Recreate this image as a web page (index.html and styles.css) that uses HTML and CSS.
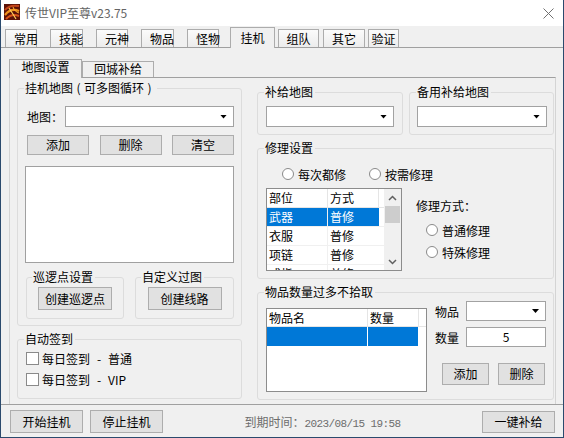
FILE: index.html
```html
<!DOCTYPE html>
<html lang="zh-CN">
<head>
<meta charset="utf-8">
<title>传世VIP至尊v23.75</title>
<link rel="stylesheet" href="styles.css">
</head>
<body>
<div class="window">
  <header class="titlebar">
    <svg class="app-icon" viewBox="0 0 16 16" width="16" height="16" aria-hidden="true">
      <rect width="16" height="16" fill="#5c1208"/>
      <path d="M1 6 C4 2 9 1 15 2" stroke="#c4461a" stroke-width="2" fill="none"/>
      <path d="M1 11 C5 6 10 5 15 7" stroke="#f0921e" stroke-width="2.2" fill="none"/>
      <path d="M2 15 C6 11 10 10 15 12" stroke="#d9541a" stroke-width="2" fill="none"/>
      <path d="M5 4 C7 7 9 10 12 15" stroke="#ffcf5a" stroke-width="1.2" fill="none"/>
      <path d="M9 3 C10 6 12 8 15 9" stroke="#ffb233" stroke-width="1" fill="none"/>
    </svg>
    <span class="title">传世VIP至尊v23.75</span>
    <svg class="close" viewBox="0 0 11 11" width="11" height="11" aria-hidden="true">
      <path d="M0.5 0.5 L10.5 10.5 M10.5 0.5 L0.5 10.5" stroke="#707070" stroke-width="1"/>
    </svg>
  </header>

  <nav class="tabs">
    <div class="tab left">常用</div>
    <div class="tab left w33">技能</div>
    <div class="tab left">元神</div>
    <div class="tab left w33">物品</div>
    <div class="tab left">怪物</div>
    <div class="tab active">挂机</div>
    <div class="tab team">组队</div>
    <div class="tab other">其它</div>
    <div class="tab verify">验证</div>
  </nav>

  <main class="panel">
    <div class="subtabs">
      <div class="subtab active">地图设置</div>
      <div class="subtab">回城补给</div>
    </div>

    <div class="subpanel">
      <div class="col-left">
        <fieldset class="group">
          <legend>挂机地图<span class="paren">(</span>可多图循环<span class="paren">)</span></legend>
          <div class="maps-body">
            <div class="field-row">
              <span class="field-label">地图：</span>
              <div class="combo"></div>
            </div>
            <div class="btn-row">
              <button class="btn btn-sm">添加</button>
              <button class="btn btn-sm">删除</button>
              <button class="btn btn-sm">清空</button>
            </div>
            <div class="listbox"></div>
            <div class="sub-row">
              <fieldset class="group sub">
                <legend>巡逻点设置</legend>
                <button class="btn btn-create">创建巡逻点</button>
              </fieldset>
              <fieldset class="group sub sub-wide">
                <legend>自定义过图</legend>
                <button class="btn btn-create">创建线路</button>
              </fieldset>
            </div>
          </div>
        </fieldset>

        <fieldset class="group">
          <legend>自动签到</legend>
          <div class="sign-body">
            <label class="check-row"><span class="checkbox"></span>每日签到<span class="dash">-</span>普通</label>
            <label class="check-row"><span class="checkbox"></span>每日签到<span class="dash">-</span>VIP</label>
          </div>
        </fieldset>
      </div>

      <div class="col-right">
        <div class="top-row">
          <fieldset class="group supply">
            <legend>补给地图</legend>
            <div class="combo-body"><div class="combo"></div></div>
          </fieldset>
          <fieldset class="group supply-alt">
            <legend>备用补给地图</legend>
            <div class="combo-body tight"><div class="combo"></div></div>
          </fieldset>
        </div>

        <fieldset class="group spaced">
          <legend>修理设置</legend>
          <div class="repair-body">
            <div class="radio-row">
              <span class="radio-item"><span class="radio"></span>每次都修</span>
              <span class="radio-item second"><span class="radio"></span>按需修理</span>
            </div>
            <div class="repair-main">
              <div class="listview repair-list">
                <div class="lv-body">
                  <div class="lv-head"><span class="cell c-part">部位</span><span class="cell c-mode">方式</span></div>
                  <div class="lv-row selected"><span class="cell c-part">武器</span><span class="cell c-mode">普修</span></div>
                  <div class="lv-row"><span class="cell c-part">衣服</span><span class="cell c-mode">普修</span></div>
                  <div class="lv-row"><span class="cell c-part">项链</span><span class="cell c-mode">普修</span></div>
                  <div class="lv-row"><span class="cell c-part">戒指</span><span class="cell c-mode">普修</span></div>
                </div>
                <div class="scrollbar">
                  <div class="sb-btn">
                    <svg viewBox="0 0 9 6" width="9" height="6"><polyline points="1,5 4.5,1.5 8,5" fill="none" stroke="#606060" stroke-width="1.5"/></svg>
                  </div>
                  <div class="sb-thumb"></div>
                  <div class="sb-fill"></div>
                  <div class="sb-btn">
                    <svg viewBox="0 0 9 6" width="9" height="6"><polyline points="1,1 4.5,4.5 8,1" fill="none" stroke="#606060" stroke-width="1.5"/></svg>
                  </div>
                </div>
              </div>
              <div class="repair-side">
                <div class="side-label">修理方式：</div>
                <div class="radio-list">
                  <span class="radio-item"><span class="radio"></span>普通修理</span>
                  <span class="radio-item"><span class="radio"></span>特殊修理</span>
                </div>
              </div>
            </div>
          </div>
        </fieldset>

        <fieldset class="group spaced">
          <legend>物品数量过多不拾取</legend>
          <div class="items-body">
            <div class="listview items-list">
              <div class="lv-body">
                <div class="lv-head"><span class="cell c-name">物品名</span><span class="cell c-qty">数量</span></div>
                <div class="lv-row selected"><span class="cell c-name"></span><span class="cell c-qty"></span></div>
              </div>
            </div>
            <div class="items-side">
              <div class="side-row">
                <span class="side-name">物品</span>
                <div class="combo"></div>
              </div>
              <div class="side-row gap">
                <span class="side-name">数量</span>
                <div class="edit">5</div>
              </div>
              <div class="side-btns">
                <button class="btn btn-item">添加</button>
                <button class="btn btn-item">删除</button>
              </div>
            </div>
          </div>
        </fieldset>
      </div>
    </div>
  </main>

  <footer class="bottombar">
    <button class="btn btn-foot">开始挂机</button>
    <button class="btn btn-foot second">停止挂机</button>
    <div class="expire">到期时间：<span class="mono">2023/08/15 19:58</span></div>
    <button class="btn btn-foot supply-btn">一键补给</button>
  </footer>
</div>
</body>
</html>
```

FILE: styles.css
```css
* { box-sizing: border-box; }

html, body {
  margin: 0;
  padding: 0;
}

body {
  width: 564px;
  height: 438px;
  overflow: hidden;
  background: #f0f0f0;
  font-family: "Noto Sans CJK SC", "Noto Sans", sans-serif;
  font-size: 12px;
  color: #000;
}

.window {
  width: 564px;
  height: 438px;
  border: 1px solid #2b4a6d;
  border-top: none;
  background: #f0f0f0;
  display: flex;
  flex-direction: column;
}

/* title bar */
.titlebar {
  flex: none;
  height: 26px;
  background: #fff;
  display: flex;
  align-items: flex-start;
  padding: 4px 0 0 3px;
}
.app-icon { flex: none; display: block; }
.title {
  margin-left: 5px;
  line-height: 18px;
  color: #646464;
}
.close {
  flex: none;
  margin-left: auto;
  margin-right: 9px;
  margin-top: 4px;
  display: block;
}

/* main tabs */
.tabs {
  flex: none;
  display: flex;
  align-items: flex-end;
  height: 22px;
  padding-left: 4px;
  border-bottom: 1px solid #a0a0a0;
}
.tab {
  flex: none;
  width: 32px;
  height: 18px;
  margin-right: 13px;
  border: 1px solid #acacac;
  border-bottom: none;
  background: linear-gradient(#fbfbfb, #ececec);
  line-height: 17px;
  text-align: center;
  white-space: nowrap;
}
.tab.left { text-align: left; padding-left: 8px; }
.tab.w33 { width: 33px; }
.tab.active {
  width: 45px;
  height: 21px;
  margin: 0 3px -1px -2px;
  background: #f0f0f0;
  line-height: 19px;
  position: relative;
}
.tab.team { width: 41px; margin-right: 4px; }
.tab.other { width: 42px; margin-right: 3px; }
.tab.verify { width: 31px; margin-right: 0; }

/* panel */
.panel {
  flex: 1;
  min-height: 0;
  display: flex;
  flex-direction: column;
  padding-top: 11px;
  border-bottom: 1px solid #a0a0a0;
}

.subtabs {
  flex: none;
  display: flex;
  align-items: flex-end;
  height: 18px;
  margin-left: 8px;
}
.subtab {
  flex: none;
  width: 72px;
  height: 16px;
  border: 1px solid #acacac;
  border-bottom: none;
  text-align: center;
  line-height: 14px;
  white-space: nowrap;
}
.subtab.active {
  width: 73px;
  height: 19px;
  margin-bottom: -1px;
  background: #f0f0f0;
  position: relative;
  z-index: 1;
}

.subpanel {
  flex: 1;
  min-height: 0;
  width: 547px;
  margin-left: 8px;
  border: 1px solid #d4d4d4;
  border-top-color: #a0a0a0;
  border-bottom: none;
  display: flex;
  gap: 15px;
  padding: 3px 1px 0 7px;
}

/* group boxes */
fieldset.group {
  margin: 0;
  padding: 0;
  min-width: 0;
  border: 1px solid #dcdcdc;
  border-radius: 3px;
}
fieldset.group > legend {
  margin-left: 6px;
  padding: 0 2px 0 1px;
  height: 14px;
  line-height: 14px;
  white-space: nowrap;
}
.paren {
  display: inline-block;
  width: 11px;
  text-align: center;
}

.col-left {
  flex: none;
  width: 225px;
  display: flex;
  flex-direction: column;
  gap: 6px;
}

.maps-body { padding: 11px 7px 6px 9px; }

.field-row {
  display: flex;
  align-items: center;
  height: 21px;
}
.field-label { flex: none; width: 38px; }

.combo {
  flex: 1;
  height: 21px;
  background: #fff;
  border: 1px solid #a2a2a2;
  display: flex;
  align-items: center;
  justify-content: flex-end;
  padding-right: 6px;
}
.combo::after {
  content: "";
  width: 7px;
  height: 4px;
  background: #000;
  clip-path: polygon(0 0, 100% 0, 50% 100%);
}

.btn {
  font-family: "Noto Sans CJK SC", "Noto Sans", sans-serif;
  font-size: 12px;
  color: #000;
  padding: 0;
  border: 1px solid #adadad;
  background: #e1e1e1;
  border-radius: 0;
  line-height: 14px;
}

.btn-row {
  display: flex;
  justify-content: space-between;
  margin-top: 8px;
}
.btn-sm { width: 62px; height: 20px; }

.listbox {
  width: 209px;
  height: 97px;
  margin: 11px 0 0 -2px;
  background: #fff;
  border: 1px solid #a0a0a0;
}

.sub-row {
  display: flex;
  gap: 11px;
  margin: 7px 0 0 -1px;
}
fieldset.group.sub {
  width: 98px;
  padding: 3px 0 8px;
  display: flex;
  justify-content: center;
}
fieldset.group.sub > legend { margin-left: 5px; }
fieldset.group.sub-wide { width: 99px; }
.btn-create { width: 74px; height: 23px; margin: 0 auto; display: block; }

.sign-body { padding: 2px 0 8px 8px; }
.check-row {
  display: flex;
  align-items: center;
  height: 21px;
  white-space: nowrap;
}
.dash {
  display: inline-block;
  width: 18px;
  text-align: center;
}
.checkbox {
  flex: none;
  width: 13px;
  height: 13px;
  background: #fff;
  border: 1px solid #8a8a8a;
  margin-right: 3px;
}

/* right column */
.col-right {
  flex: none;
  width: 297px;
  display: flex;
  flex-direction: column;
  padding-top: 4px;
}

.top-row {
  display: flex;
  gap: 6px;
}
fieldset.group.supply { width: 146px; }
fieldset.group.supply-alt { width: 145px; }

.combo-body {
  display: flex;
  padding: 7px 8px;
}
.combo-body.tight { padding: 7px 6px 7px 7px; }

fieldset.group.spaced { margin-top: 6px; }

.repair-body { padding: 9px 0 7px 8px; }

.radio-row {
  display: flex;
  align-items: center;
  height: 20px;
  padding-left: 16px;
}
.radio-item {
  display: flex;
  align-items: center;
  white-space: nowrap;
}
.radio-item.second { margin-left: 23px; }
.radio {
  flex: none;
  width: 12px;
  height: 12px;
  border-radius: 50%;
  background: #fff;
  border: 1px solid #8a8a8a;
  margin-right: 4px;
}

.repair-main {
  display: flex;
  margin-top: 4px;
}

.listview {
  flex: none;
  display: flex;
  background: #fff;
  border: 1px solid #8c8c8c;
  overflow: hidden;
}
.repair-list { width: 136px; height: 83px; }
.items-list { width: 161px; height: 84px; margin-top: 7px; }

.lv-body {
  flex: 1;
  min-width: 0;
  overflow: hidden;
}
.lv-head {
  display: flex;
  height: 19px;
  line-height: 18px;
  border-bottom: 1px solid #e5e5e5;
}
.lv-head .cell { border-right: 1px solid #e5e5e5; }
.items-list .lv-head { height: 18px; line-height: 17px; }

.lv-row {
  display: flex;
  height: 19px;
  line-height: 18px;
  border-bottom: 1px solid #f0f0f0;
}
.lv-row .cell { border-right: 1px solid #f0f0f0; }
.lv-row .cell:last-child { border-right: none; }
.lv-row.selected .cell {
  background: #0078d7;
  color: #fff;
}
.items-list .lv-row { border-bottom: none; }
.items-list .lv-row .cell { border-right: 1px solid #fff; }

.cell {
  flex: none;
  padding-left: 2px;
  white-space: nowrap;
  overflow: hidden;
}
.c-part { width: 61px; }
.c-mode { width: 51px; }
.c-name { width: 101px; }
.c-qty { width: 51px; }

.scrollbar {
  flex: none;
  width: 17px;
  background: #f0f0f0;
  display: flex;
  flex-direction: column;
  align-items: center;
}
.sb-btn {
  flex: none;
  height: 17px;
  width: 17px;
  display: flex;
  align-items: center;
  justify-content: center;
}
.sb-btn svg { display: block; }
.sb-thumb {
  flex: none;
  width: 15px;
  height: 17px;
  background: #cdcdcd;
}
.sb-fill { flex: 1; }

.repair-side {
  margin-left: 14px;
}
.side-label {
  margin-top: 11px;
  line-height: 14px;
  white-space: nowrap;
}
.radio-list {
  display: flex;
  flex-direction: column;
  margin-top: 6px;
  padding-left: 10px;
}
.radio-list .radio-item { height: 22px; }

.items-body {
  display: flex;
  padding: 2px 7px 7px 8px;
}
.items-side {
  margin-left: 8px;
  width: 111px;
  display: flex;
  flex-direction: column;
}
.side-row {
  display: flex;
  align-items: center;
  height: 20px;
}
.side-row.gap { margin-top: 6px; }
.side-name { flex: none; width: 31px; }
.side-row .combo { height: 20px; }
.edit {
  flex: 1;
  height: 20px;
  background: #fff;
  border: 1px solid #a2a2a2;
  text-align: center;
  line-height: 18px;
}
.side-btns {
  display: flex;
  gap: 9px;
  margin-top: 16px;
  padding-left: 7px;
}
.btn-item { width: 47px; height: 22px; }

/* bottom bar */
.bottombar {
  flex: none;
  height: 32px;
  display: flex;
  align-items: flex-start;
  padding: 5px 8px 0 9px;
}
.btn-foot { flex: none; width: 73px; height: 23px; }
.btn-foot.second { margin-left: 7px; }
.btn-foot.supply-btn { height: 22px; margin-top: 1px; }
.expire {
  flex: 1;
  text-align: center;
  line-height: 23px;
  color: #6d6d6d;
  white-space: nowrap;
}
.mono {
  font-family: "Liberation Mono", "DejaVu Sans Mono", monospace;
  font-size: 11px;
  letter-spacing: -0.6px;
}
```
